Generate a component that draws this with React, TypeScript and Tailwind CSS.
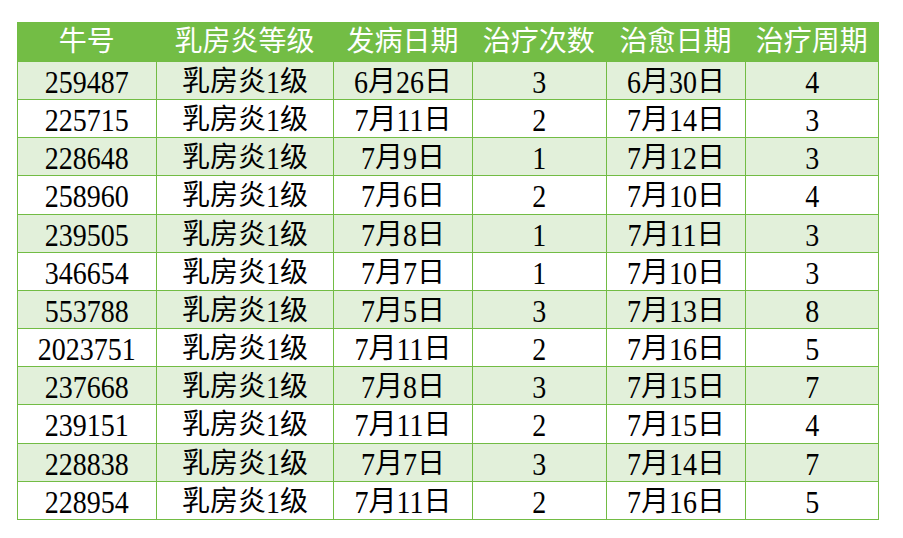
const COLS = [
  { label: '牛号', w: 'w-[138px]' },
  { label: '乳房炎等级', w: 'w-[178px]' },
  { label: '发病日期', w: 'w-[139px]' },
  { label: '治疗次数', w: 'w-[134px]' },
  { label: '治愈日期', w: 'w-[140px]' },
  { label: '治疗周期', w: 'w-[133px]' },
]

const ROWS = [
  ['259487', '乳房炎1级', '6月26日', '3', '6月30日', '4'],
  ['225715', '乳房炎1级', '7月11日', '2', '7月14日', '3'],
  ['228648', '乳房炎1级', '7月9日', '1', '7月12日', '3'],
  ['258960', '乳房炎1级', '7月6日', '2', '7月10日', '4'],
  ['239505', '乳房炎1级', '7月8日', '1', '7月11日', '3'],
  ['346654', '乳房炎1级', '7月7日', '1', '7月10日', '3'],
  ['553788', '乳房炎1级', '7月5日', '3', '7月13日', '8'],
  ['2023751', '乳房炎1级', '7月11日', '2', '7月16日', '5'],
  ['237668', '乳房炎1级', '7月8日', '3', '7月15日', '7'],
  ['239151', '乳房炎1级', '7月11日', '2', '7月15日', '4'],
  ['228838', '乳房炎1级', '7月7日', '3', '7月14日', '7'],
  ['228954', '乳房炎1级', '7月11日', '2', '7月16日', '5'],
]

// digits in the sheet font are taller than Liberation Serif, stretch them a bit
function Cell({ text }: { text: string }) {
  const parts = text.match(/\d+|\D+/g) ?? []
  return (
    <>
      {parts.map((p, k) =>
        /\d/.test(p) ? (
          <span key={k} className="inline-block scale-y-[1.16] translate-y-[1px]">{p}</span>
        ) : (
          <span key={k}>{p}</span>
        )
      )}
    </>
  )
}

export default function App() {
  return (
    <div className="w-[903px] h-[538px] bg-white pt-[22px] pl-[17px] font-['Liberation_Serif','Noto_Sans_CJK_SC',serif]">
      <div className="w-[862px] border border-[#72bc44]">
        {/* header */}
        <div className="flex h-[38px] bg-[#73bd45] text-white">
          {COLS.map((c) => (
            <div key={c.label} className={`${c.w} flex items-center justify-center text-[28px] leading-none`}>
              {c.label}
            </div>
          ))}
        </div>

        {ROWS.map((row, i) => (
          <div
            key={i}
            className={`flex border-t border-[#72bc44] ${i % 2 === 0 ? 'bg-[#e2f0da]' : 'bg-white'} ${i === 3 || i === 9 ? 'h-[39px]' : 'h-[38px]'}`}
          >
            {row.map((cell, j) => (
              <div
                key={j}
                className={`${COLS[j].w} flex items-center justify-center pt-[2px] text-[28px] leading-none text-black ${j > 0 ? 'border-l border-[#72bc44]' : ''}`}
              >
                <Cell text={cell} />
              </div>
            ))}
          </div>
        ))}
      </div>
    </div>
  )
}
